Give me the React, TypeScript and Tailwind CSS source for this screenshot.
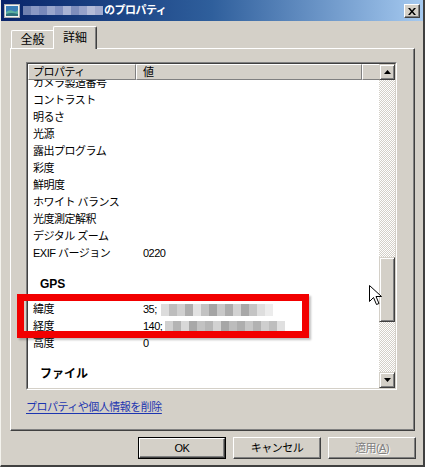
import type { ReactNode } from "react";

// ── Small pieces ─────────────────────────────────────────────────────────────

const TITLE_MOSAIC = [
  "bg-[#6f80b0]",
  "bg-[#8a98c4]",
  "bg-[#7888ba]",
  "bg-[#9aa6cc]",
  "bg-[#8190c0]",
  "bg-[#a9b3d4]",
  "bg-[#7e8ebd]",
  "bg-[#96a2ca]",
  "bg-[#b4bcd8]",
  "bg-[#a0aace]",
];

const LAT_MOSAIC = [
  "bg-[#dcdcdc]",
  "bg-[#bdbdbd]",
  "bg-[#d0d0d0]",
  "bg-[#aeaeae]",
  "bg-[#e2e2e2]",
  "bg-[#c2c2c2]",
  "bg-[#a4a4a4]",
  "bg-[#c8c8c8]",
  "bg-[#acacac]",
  "bg-[#d2d2d2]",
  "bg-[#a8a8a8]",
  "bg-[#c4c4c4]",
  "bg-[#dedede]",
  "bg-[#ececec]",
];

const LON_MOSAIC = [
  "bg-[#d0d0d0]",
  "bg-[#b4b4b4]",
  "bg-[#d8d8d8]",
  "bg-[#a8a8a8]",
  "bg-[#c2c2c2]",
  "bg-[#b6b6b6]",
  "bg-[#d2d2d2]",
  "bg-[#a6a6a6]",
  "bg-[#bcbcbc]",
  "bg-[#aeaeae]",
  "bg-[#c6c6c6]",
  "bg-[#b2b2b2]",
  "bg-[#cecece]",
  "bg-[#bebebe]",
  "bg-[#e0e0e0]",
];

function Mosaic({ cells, h }: { cells: string[]; h: string }) {
  return (
    <span className={`flex ${h} blur-[0.7px]`}>
      {cells.map((c, i) => (
        <span key={i} className={`w-[8px] h-full ${c}`} />
      ))}
    </span>
  );
}

function Row({ label, value }: { label: string; value?: ReactNode }) {
  return (
    <div className="flex h-[17px] items-center pl-[5px]">
      <span className="w-[110px] shrink-0">{label}</span>
      <span className="flex items-center">{value}</span>
    </div>
  );
}

function Group({ label }: { label: string }) {
  return (
    <div className="h-[39px] pt-[13px] pl-[12px]">
      <div className="h-[17px] flex items-center font-bold text-[12px] tracking-normal">
        {label}
      </div>
    </div>
  );
}

function Arrow({ up }: { up?: boolean }) {
  return (
    <div className="w-[16px] h-[16px] shrink-0 flex items-center justify-center bg-[#d4d0c8] border border-t-[#d4d0c8] border-l-[#d4d0c8] border-r-[#404040] border-b-[#404040] shadow-[inset_1px_1px_#ffffff,inset_-1px_-1px_#808080]">
      <svg width="7" height="4" viewBox="0 0 7 4">
        {up ? (
          <path d="M3.5 0 L7 4 L0 4 Z" fill="#000" />
        ) : (
          <path d="M0 0 L7 0 L3.5 4 Z" fill="#000" />
        )}
      </svg>
    </div>
  );
}

function Button({
  children,
  primary,
  disabled,
}: {
  children: ReactNode;
  primary?: boolean;
  disabled?: boolean;
}) {
  return (
    <div
      className={`w-[88px] h-[22px] ${primary ? "border border-black" : ""}`}
    >
      <div className="w-full h-full flex items-center justify-center bg-[#d4d0c8] border border-t-white border-l-white border-r-[#404040] border-b-[#404040] shadow-[inset_-1px_-1px_#808080]">
        <span
          className={
            disabled
              ? "text-[#808080] [text-shadow:1px_1px_#ffffff]"
              : "text-black"
          }
        >
          {children}
        </span>
      </div>
    </div>
  );
}

// ── Main ─────────────────────────────────────────────────────────────────────

export default function App() {
  return (
    <div className="relative w-[425px] h-[467px] overflow-hidden bg-[#d4d0c8] border-l border-t-0 border-l-[#f4f3ee] border-r-2 border-b-2 border-r-[#404040] border-b-[#404040] font-['Liberation_Sans','Noto_Sans_CJK_JP',sans-serif] text-[11px] tracking-[-0.5px] text-black leading-none">
      {/* Title bar */}
      <div className="h-[21px] flex items-center pl-[3px] pr-[3px] bg-gradient-to-r from-[#0a246a] via-[#2f5f9c] to-[#a6caf0]">
        <svg width="16" height="14" viewBox="0 0 16 14" className="shrink-0">
          <rect x="0.5" y="0.5" width="15" height="13" fill="#f4f4f4" stroke="#b0b0b0" />
          <rect x="2" y="2" width="12" height="10" fill="#3a7fb8" />
          <path d="M2 8 Q6 5 9 7 T14 6 L14 12 L2 12 Z" fill="#5bb0a0" />
          <path d="M2 10 Q7 8 14 10 L14 12 L2 12 Z" fill="#2d6f7a" />
        </svg>
        <span className="ml-[3px]">
          <Mosaic cells={TITLE_MOSAIC} h="h-[9px]" />
        </span>
        <span className="ml-[1px] font-bold text-white text-[11px]">
          のプロパティ
        </span>
        <div className="flex-1" />
        <div className="w-[16px] h-[14px] mt-[1px] flex items-center justify-center bg-[#d4d0c8] border border-t-white border-l-white border-r-[#404040] border-b-[#404040] shadow-[inset_-1px_-1px_#808080]">
          <svg width="8" height="7" viewBox="0 0 8 7">
            <path d="M0 0 L2 0 L4 2.5 L6 0 L8 0 L5 3.5 L8 7 L6 7 L4 4.5 L2 7 L0 7 L3 3.5 Z" fill="#000" />
          </svg>
        </div>
      </div>

      {/* Tabs */}
      <div className="mt-[5px] ml-[10px] h-[22px] flex items-end text-[12px] tracking-normal">
        <div className="w-[42px] h-[18px] flex items-center justify-center rounded-tl-[2px] border-t border-l border-t-white border-l-white">
          全般
        </div>
        <div className="relative z-10 -mb-[1px] w-[44px] h-[23px] flex items-center justify-center pb-[1px] bg-[#d4d0c8] rounded-t-[2px] border-t border-l border-r border-t-white border-l-white border-r-[#404040] shadow-[inset_-1px_0_#808080]">
          詳細
        </div>
      </div>

      {/* Tab panel */}
      <div className="ml-[9px] w-[405px] h-[383px] pl-[15px] pt-[13px] border border-t-white border-l-white border-r-[#404040] border-b-[#404040] shadow-[inset_-1px_-1px_#808080]">
        {/* List box */}
        <div className="w-[371px] h-[328px] border border-t-[#808080] border-l-[#808080] border-r-white border-b-white">
          <div className="w-full h-full flex bg-white border border-t-[#404040] border-l-[#404040] border-r-[#d4d0c8] border-b-[#d4d0c8]">
            <div className="flex-1 overflow-hidden">
              {/* Header */}
              <div className="relative z-10 h-[16px] flex bg-[#d4d0c8]">
                <div className="w-[108px] pl-[4px] flex items-center border-t border-l border-r border-b border-t-white border-l-white border-r-[#808080] border-b-[#808080]">
                  プロパティ
                </div>
                <div className="w-[226px] pl-[6px] flex items-center border-t border-l border-r border-b border-t-white border-l-white border-r-[#808080] border-b-[#808080]">
                  値
                </div>
                <div className="flex-1 border-t border-l border-b border-t-white border-l-white border-b-[#808080]" />
              </div>

              {/* Rows */}
              <div className="-mt-[5px]">
                <Row label="カメラ製造番号" />
                <Row label="コントラスト" />
                <Row label="明るさ" />
                <Row label="光源" />
                <Row label="露出プログラム" />
                <Row label="彩度" />
                <Row label="鮮明度" />
                <Row label="ホワイト バランス" />
                <Row label="光度測定解釈" />
                <Row label="デジタル ズーム" />
                <Row label="EXIF バージョン" value="0220" />
                <Group label="GPS" />
                <Row
                  label="緯度"
                  value={
                    <>
                      <span>35;</span>
                      <span className="ml-[4px]">
                        <Mosaic cells={LAT_MOSAIC} h="h-[12px]" />
                      </span>
                    </>
                  }
                />
                <Row
                  label="経度"
                  value={
                    <>
                      <span>140;</span>
                      <span className="ml-[3px]">
                        <Mosaic cells={LON_MOSAIC} h="h-[11px]" />
                      </span>
                    </>
                  }
                />
                <Row label="高度" value="0" />
                <Group label="ファイル" />
              </div>
            </div>

            {/* Scrollbar */}
            <div className="w-[16px] flex flex-col">
              <Arrow up />
              <div className="h-[177px] bg-[repeating-conic-gradient(#ffffff_0_25%,#d4d0c8_0_50%)] bg-[length:2px_2px]" />
              <div className="h-[65px] bg-[#d4d0c8] border border-t-[#d4d0c8] border-l-[#d4d0c8] border-r-[#404040] border-b-[#404040] shadow-[inset_1px_1px_#ffffff,inset_-1px_-1px_#808080]" />
              <div className="flex-1 bg-[repeating-conic-gradient(#ffffff_0_25%,#d4d0c8_0_50%)] bg-[length:2px_2px]" />
              <Arrow />
            </div>
          </div>
        </div>

        {/* Link */}
        <div className="mt-[11px] h-[12px] flex items-center">
          <span className="text-[#1c35b0] underline underline-offset-2">
            プロパティや個人情報を削除
          </span>
        </div>
      </div>

      {/* Buttons */}
      <div className="mt-[6px] pr-[7px] flex justify-end gap-[7px]">
        <Button primary>OK</Button>
        <Button>キャンセル</Button>
        <Button disabled>
          適用(<span className="underline">A</span>)
        </Button>
      </div>

      {/* Red annotation box */}
      <div className="absolute left-[16px] top-[294px] w-[292px] h-[44px] border-[7px] border-[#f20000] shadow-[2px_2px_2px_rgba(0,0,0,0.25)]" />

      {/* Mouse cursor */}
      <svg
        className="absolute left-[368px] top-[285px]"
        width="13"
        height="21"
        viewBox="0 0 13 21"
      >
        <path
          d="M0.5 0.5 L0.5 16.5 L4.5 12.5 L7.5 19.5 L10 18.5 L7 11.5 L12.5 11.5 Z"
          fill="#fff"
          stroke="#000"
          strokeWidth="1"
        />
      </svg>
    </div>
  );
}
